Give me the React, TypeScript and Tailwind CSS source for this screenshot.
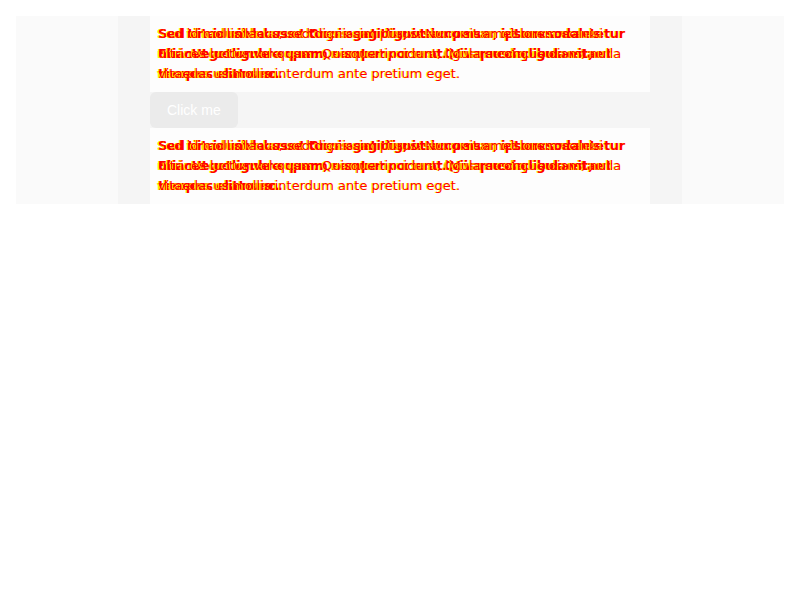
const textA =
  'Sed id mollis lacus, sed dignissim purus. Nunc sit amet lorem ac nisi ultrices luctus vel quam. Quisque tincidunt, ligula a congue diam, nulla vitae lacus mollis interdum ante pretium eget.'
const textB =
  'Sed tincidunt lacus et turpis sagittis, ut accumsan ipsum sodales. Etiam eget ornare quam, non tempor erat. Vivamus in ligula vitae rhoncus elit nunc.'
const textC =
  'Sed vitae nibh lacus. Cras eget dignissim purus, vitae consectetur nisi. Ut ac ligula a quam semper cursus. Quisque dapibus est, ut tempus erat sem.'

// one paragraph drawn twice: yellow underneath, red shifted a pixel right
function Layer({ text, className = '' }: { text: string; className?: string }) {
  return (
    <div className={`absolute left-2 top-2 w-[470px] ${className}`}>
      <p className="absolute inset-0 -translate-x-px text-[#ffff00]">{text}</p>
      <p className="absolute inset-0 text-[#ff0000]">{text}</p>
    </div>
  )
}

function GlitchText() {
  return (
    <div className="relative h-[76px] bg-[#fdfdfd] text-[13px] leading-5 font-['DejaVu_Sans',Verdana,sans-serif]">
      <Layer text={textC} className="font-semibold tracking-[-0.3px]" />
      <Layer text={textB} className="font-semibold tracking-[-0.6px]" />
      <Layer text={textA} />
    </div>
  )
}

export default function App() {
  return (
    <div className="min-h-screen bg-white p-4">
      <div className="bg-[#fafafa]">
        <div className="mx-auto w-[564px] bg-[#f5f5f5] px-8">
          <GlitchText />
          <div className="h-9">
            <button className="h-9 rounded-md bg-[#ebebeb] px-[17px] text-[14px] text-white font-['Liberation_Sans',Arial,sans-serif]">
              Click me
            </button>
          </div>
          <GlitchText />
        </div>
      </div>
    </div>
  )
}
